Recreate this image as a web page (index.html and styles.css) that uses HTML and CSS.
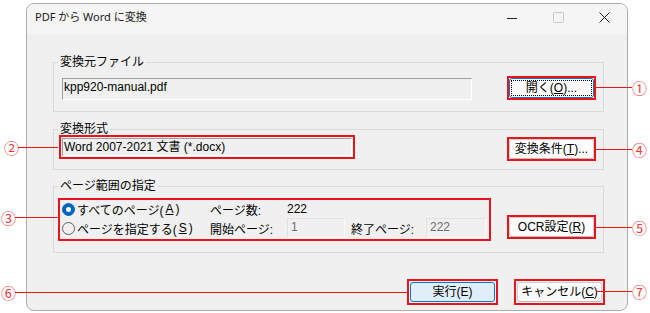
FILE: index.html
```html
<!DOCTYPE html>
<html lang="ja">
<head>
<meta charset="utf-8">
<title>PDF から Word に変換</title>
<link rel="stylesheet" href="styles.css">
</head>
<body>
<div class="window">
  <header class="titlebar">
    <span class="title">PDF から Word に変換</span>
    <div class="controls">
      <span class="ctl"><svg width="10" height="10" viewBox="0 0 10 10"><path d="M0 5.5H10" stroke="#1b1b1b" stroke-width="1"/></svg></span>
      <span class="ctl"><svg width="11" height="11" viewBox="0 0 11 11"><rect x="0.5" y="0.5" width="10" height="10" rx="1" fill="none" stroke="#c6c6c6"/></svg></span>
      <span class="ctl"><svg width="11" height="11" viewBox="0 0 11 11"><path d="M0.5 0.5L10.5 10.5M10.5 0.5L0.5 10.5" stroke="#1b1b1b" stroke-width="1"/></svg></span>
    </div>
  </header>
  <main class="body">
    <fieldset class="group g1">
      <legend>変換元ファイル</legend>
      <div class="row">
        <div class="edit file">kpp920-manual.pdf</div>
        <div class="mark push">
          <button class="btn btn-focus"><span class="focus-rect">開く(<u>O</u>)...</span></button>
        </div>
      </div>
    </fieldset>
    <fieldset class="group g2">
      <legend>変換形式</legend>
      <div class="row">
        <div class="edit format mark-field">Word 2007-2021 文書 (*.docx)</div>
        <div class="mark push shift">
          <button class="btn">変換条件(<u>T</u>)...</button>
        </div>
      </div>
    </fieldset>
    <fieldset class="group g3">
      <legend>ページ範囲の指定</legend>
      <div class="row">
        <div class="range">
          <label class="radio"><span class="dot on"></span>すべてのページ(<u>A</u>)</label>
          <span class="lbl">ページ数:</span>
          <span class="val">222</span>
          <span></span>
          <span></span>
          <label class="radio"><span class="dot"></span>ページを指定する(<u>S</u>)</label>
          <span class="lbl">開始ページ:</span>
          <span class="dis-field w58">1</span>
          <span class="lbl">終了ページ:</span>
          <span class="dis-field w60">222</span>
        </div>
        <div class="mark push bottom">
          <button class="btn">OCR設定(<u>R</u>)</button>
        </div>
      </div>
    </fieldset>
    <div class="footer">
      <div class="mark wide"><button class="btn btn-default">実行(E)</button></div>
      <div class="mark wide"><button class="btn">キャンセル(<u>C</u>)</button></div>
    </div>
  </main>
</div>

<div class="callout right c1"><span class="line"></span><span class="num">①</span></div>
<div class="callout left c2"><span class="num">②</span><span class="line"></span></div>
<div class="callout left c3"><span class="num">③</span><span class="line"></span></div>
<div class="callout right c4"><span class="line"></span><span class="num">④</span></div>
<div class="callout right c5"><span class="line"></span><span class="num">⑤</span></div>
<div class="callout left c6"><span class="num">⑥</span><span class="line"></span></div>
<div class="callout right c7"><span class="line"></span><span class="num">⑦</span></div>
</body>
</html>
```
FILE: styles.css
```css
* { box-sizing: border-box; }
html, body { margin: 0; padding: 0; }
body {
  position: relative;
  width: 650px;
  height: 313px;
  background: #ffffff;
  overflow: hidden;
  font-family: "Liberation Sans", "Noto Sans CJK JP", sans-serif;
  font-size: 12px;
  color: #000;
}

.window {
  margin: 3px 0 0 26px;
  width: 602px;
  height: 308px;
  border: 1px solid #ababab;
  border-radius: 8px;
  background: #f0f0f0;
  overflow: hidden;
}

.titlebar {
  height: 30px;
  background: #f5f5f5;
  display: flex;
  align-items: flex-start;
}
.title {
  flex: 1;
  font-family: "Noto Sans", "Noto Sans CJK JP", sans-serif;
  font-size: 11px;
  line-height: 16px;
  padding: 5px 0 0 8px;
  color: #1a1a1a;
}
.controls { display: flex; }
.ctl {
  width: 46px;
  height: 27px;
  display: flex;
  align-items: center;
  justify-content: center;
}

.body { padding: 21px 0 0 26px; }

.group {
  margin: 0;
  width: 551px;
  min-width: 0;
  border: 1px solid #dadada;
  padding: 0 9px 0 8px;
}
.group legend {
  margin-left: -4px;
  padding: 0 2px;
  line-height: 14px;
  font-size: 12px;
}
.g1 { padding-top: 9px; padding-bottom: 11px; }
.g2 { margin-top: 10px; padding-top: 2px; padding-bottom: 10px; }
.g3 { margin-top: 9px; padding-top: 7px; padding-bottom: 13px; }

.row { display: flex; align-items: flex-start; }

.edit {
  background: #f0f0f0;
  border: 1px solid;
  border-color: #a0a0a0 #ffffff #ffffff #a0a0a0;
  padding: 1px 0 0 1px;
  line-height: 14px;
  white-space: nowrap;
}
.file { width: 410px; height: 22px; }
.format { width: 290px; height: 18px; }
.mark-field { outline: 2px solid #e8141b; outline-offset: 1px; }

.mark { display: flex; outline: 2px solid #e8141b; outline-offset: 0; }
.mark.wide { outline-offset: 1px; }
.push { margin-left: auto; }
.shift { margin-top: 1px; }
.bottom { align-self: flex-end; margin-bottom: 2px; }

.btn {
  width: 85px;
  height: 20px;
  padding: 0;
  margin: 0;
  font: inherit;
  font-size: 12px;
  line-height: 14px;
  color: #000;
  background: #fdfdfd;
  border: 1px solid #d0d0d0;
  border-bottom-color: #bcbcbc;
  border-radius: 3px;
  display: flex;
  align-items: center;
  justify-content: center;
  white-space: nowrap;
}
.btn-focus { border-color: #0078d4; padding: 1px; }
.focus-rect {
  flex: 1;
  align-self: stretch;
  border: 1px dotted #000;
  display: flex;
  align-items: center;
  justify-content: center;
}
.btn-default { background: #e0eef9; border-color: #0078d4; }

.range {
  margin-left: -2px;
  width: 429px;
  padding: 0 3px 1px 2px;
  display: grid;
  grid-template-columns: 148px 77px 64px 75px 60px;
  grid-template-rows: 18px 20px;
  align-items: center;
  outline: 2px solid #e8141b;
  white-space: nowrap;
}
.radio { display: flex; align-items: center; gap: 2px; }
.dot {
  width: 13px;
  height: 13px;
  border-radius: 50%;
  border: 1px solid #626262;
  display: flex;
  align-items: center;
  justify-content: center;
}
.dot.on { background: #0067c0; border-color: #0067c0; }
.dot.on::after {
  content: "";
  width: 5px;
  height: 5px;
  border-radius: 50%;
  background: #fff;
}
.dis-field {
  height: 20px;
  border: 1px solid;
  border-color: #e2e2e2 #fcfcfc #fcfcfc #e2e2e2;
  padding: 1px 0 0 3px;
  line-height: 14px;
  color: #6d6d6d;
  align-self: start;
}
.w58 { width: 58px; }
.w60 { width: 60px; }

.footer {
  width: 551px;
  margin-top: 29px;
  padding-right: 2px;
  display: flex;
  justify-content: flex-end;
  gap: 22px;
}

.callout {
  position: absolute;
  display: flex;
  align-items: center;
  height: 15px;
}
.callout .line { flex: 1; height: 1px; background: #e8141b; }
.callout .num {
  width: 14px;
  font-family: "Noto Sans CJK JP", sans-serif;
  font-size: 15px;
  line-height: 15px;
  color: #ef3b3b;
  text-align: center;
}
.callout.right { left: 596px; width: 50px; }
.c1 { top: 80px; }
.c4 { top: 142px; }
.c5 { top: 220px; }
.c7 { top: 284px; left: 604px; width: 42px; }
.c2 { top: 140px; left: 4px; width: 54px; }
.c3 { top: 210px; left: 1px; width: 57px; }
.c6 { top: 285px; left: 1px; width: 407px; }
```
